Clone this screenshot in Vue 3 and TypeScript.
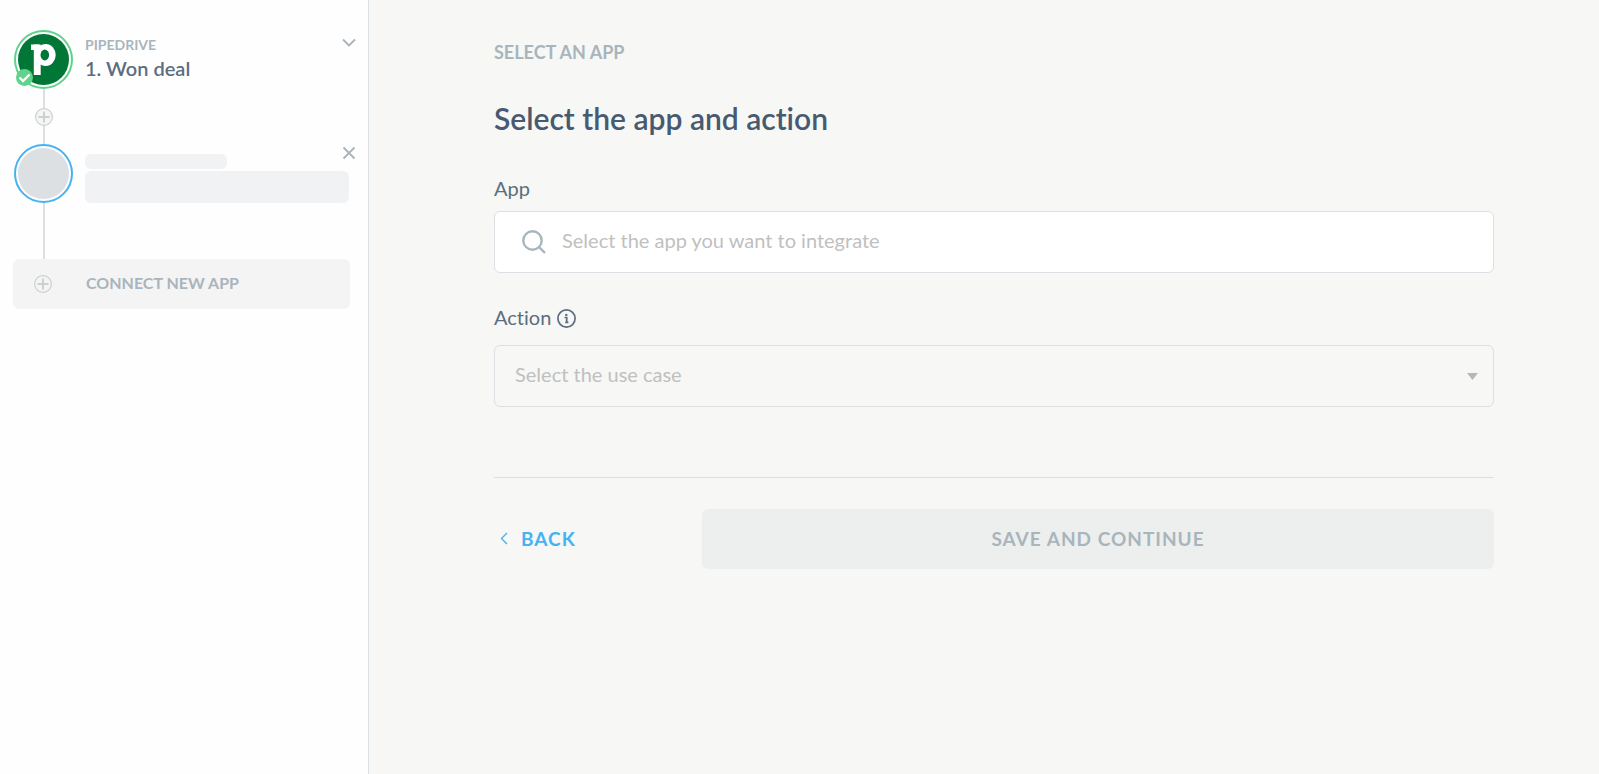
<script setup lang="ts">
import { ref } from 'vue'

const appQuery = ref('')
const action = ref('')
</script>

<template>
  <div class="layout">
    <aside class="sidebar">
      <ol class="steps">
        <li class="step">
          <div class="avatar done">
            <svg class="logo" viewBox="0 0 51 51" aria-hidden="true">
              <circle cx="25.5" cy="25.5" r="25.5" fill="#017737" />
              <ellipse cx="27.7" cy="21" rx="10" ry="11" fill="#fff" />
              <rect x="13" y="10.5" width="8" height="5.5" fill="#fff" />
              <rect x="15.8" y="10.5" width="6.9" height="30.5" fill="#fff" />
              <ellipse cx="26.8" cy="21" rx="4.3" ry="5.4" fill="#017737" />
            </svg>
            <svg class="check" viewBox="0 0 17 17" aria-hidden="true">
              <circle cx="8.5" cy="8.5" r="8.5" fill="#5fd38a" />
              <path d="M3.500 8.500l3.500 3.500 6.500-6.500" fill="none" stroke="#fff" stroke-width="2.4" />
            </svg>
          </div>
          <div class="info">
            <span class="app-name">PIPEDRIVE</span>
            <span class="step-name">1. Won deal</span>
          </div>
          <button class="icon-button" type="button" aria-label="Expand step">
            <svg width="14" height="14" viewBox="0 0 14 14"><path d="M1 3.5l6 6 6-6" /></svg>
          </button>
        </li>
        <li class="link short">
          <button class="add" type="button" aria-label="Add step">
            <svg width="18" height="18" viewBox="0 0 18 18">
              <circle cx="9" cy="9" r="8.4" fill="#f5f5f5" /><path d="M9 3.5v11M3.5 9h11" />
            </svg>
          </button>
        </li>
        <li class="step">
          <div class="avatar current"><div class="blank"></div></div>
          <div class="skeleton">
            <div class="bar small"></div>
            <div class="bar"></div>
          </div>
          <button class="icon-button" type="button" aria-label="Remove step">
            <svg width="14" height="14" viewBox="0 0 14 14"><path d="M1.5 1.5l11 11M12.5 1.5l-11 11" /></svg>
          </button>
        </li>
        <li class="link"></li>
      </ol>
      <button class="connect" type="button">
        <svg class="plus" width="18" height="18" viewBox="0 0 18 18" aria-hidden="true">
          <circle cx="9" cy="9" r="8.4" fill="none" /><path d="M9 3.5v11M3.5 9h11" />
        </svg>
        <span>CONNECT NEW APP</span>
      </button>
    </aside>

    <main class="main">
      <p class="eyebrow">SELECT AN APP</p>
      <h1>Select the app and action</h1>
      <form @submit.prevent>
        <label class="label" for="app">App</label>
        <div class="field search">
          <svg width="24" height="24" viewBox="0 0 24 24" aria-hidden="true">
            <circle cx="10.5" cy="10.5" r="9.2" /><path d="M17 17l6 6" />
          </svg>
          <input id="app" v-model="appQuery" type="text" placeholder="Select the app you want to integrate" />
        </div>
        <div class="label-row">
          <label class="label" for="action">Action</label>
          <svg class="help" width="19" height="19" viewBox="0 0 19 19" aria-hidden="true">
            <circle cx="9.5" cy="9.5" r="8.6" fill="none" stroke="#5c6d80" stroke-width="1.7" />
            <circle cx="9.3" cy="5.9" r="1.2" fill="#5c6d80" />
            <path d="M7.500 8.500h2.200v4.800M8.200 13.300h3.200" fill="none" stroke="#5c6d80" stroke-width="1.7" />
          </svg>
        </div>
        <div class="field">
          <select id="action" v-model="action">
            <option value="">Select the use case</option>
          </select>
          <svg class="caret" width="11" height="7" viewBox="0 0 11 7" aria-hidden="true"><path d="M0 0h11L5.500 7z" fill="#b4b8ba" /></svg>
        </div>
        <hr />
        <div class="actions">
          <button class="back" type="button">
            <svg width="8" height="13" viewBox="0 0 8 13" aria-hidden="true"><path d="M7 1L1.500 6.500 7 12" /></svg>
            <span>BACK</span>
          </button>
          <button class="save" type="submit" disabled>SAVE AND CONTINUE</button>
        </div>
      </form>
    </main>
  </div>
</template>

<style>
body {
  background: #f7f7f5;
}
</style>

<style scoped>
* {
  box-sizing: border-box;
}
.layout {
  display: flex;
  min-height: 100vh;
  background: #f7f7f5;
  font-family: Lato, "Liberation Sans", sans-serif;
  font-variant-ligatures: none;
  color: #475a70;
}
button,
input,
select {
  font: inherit;
}
button {
  padding: 0;
  border: 0;
  background: none;
  cursor: pointer;
}
svg {
  display: block;
  flex: none;
}
.sidebar {
  flex: none;
  width: 369px;
  padding: 30px 12px 0 13px;
  background: #fefefe;
  border-right: 1px solid #dbe0e4;
}
.steps {
  margin: 0;
  padding: 0 0 0 1px;
  list-style: none;
}
.step {
  display: flex;
  height: 59px;
}
.avatar {
  position: relative;
  flex: none;
  width: 59px;
  height: 59px;
  padding: 2px;
  border: 2px solid;
  border-radius: 50%;
}
.done {
  border-color: #5fd38a;
}
.current {
  border-color: #45b3f2;
}
.blank {
  height: 51px;
  border-radius: 50%;
  background: #dce0e3;
}
.logo {
  width: 51px;
  height: 51px;
}
.check {
  position: absolute;
  left: 0;
  bottom: 1px;
  width: 17px;
  height: 17px;
}
.info {
  flex: 1;
  display: flex;
  flex-direction: column;
  padding: 6px 0 0 12px;
}
.app-name {
  font-size: 14px;
  line-height: 18px;
  font-weight: 700;
  color: #a9b5bc;
}
.step-name {
  font-size: 20px;
  line-height: 28px;
  font-weight: 600;
  color: #5c6d80;
}
.icon-button {
  height: 14px;
  margin-top: 2px;
}
.step:first-child .icon-button {
  margin-top: 6px;
}
.icon-button path {
  fill: none;
  stroke: #a9b3ba;
  stroke-width: 1.8;
}
.link {
  display: flex;
  align-items: center;
  justify-content: center;
  width: 59px;
  height: 56px;
  background: linear-gradient(#dce0e4, #dce0e4) center / 2px 100% no-repeat;
}
.link.short {
  height: 55px;
}
.add circle,
.plus circle {
  stroke: #cdd0d1;
  stroke-width: 1.2;
}
.add path,
.plus path {
  stroke: #cdd0d1;
  stroke-width: 2;
}
.skeleton {
  flex: 1;
  padding-top: 10px;
  padding-left: 12px;
  margin-right: -7px;
}
.bar {
  height: 32px;
  border-radius: 6px;
  background: #f1f2f4;
}
.small {
  width: 142px;
  height: 15px;
  margin-bottom: 2px;
}
.connect {
  display: flex;
  align-items: center;
  gap: 34px;
  width: calc(100% - 6px);
  height: 50px;
  padding-left: 21px;
  border-radius: 6px;
  background: #f4f4f4;
  color: #a9b5bc;
  font-size: 16px;
  font-weight: 700;
}
.connect span {
  padding-bottom: 4px;
}
.main {
  flex: 1;
  padding: 40px 105px 40px 125px;
}
.eyebrow {
  margin: 0;
  font-size: 18px;
  line-height: 24px;
  font-weight: 700;
  color: #a9b5bc;
}
h1 {
  margin: 34px 0 38px;
  font-size: 30px;
  line-height: 40px;
  font-weight: 600;
}
.label {
  display: block;
  font-size: 20px;
  line-height: 24px;
  color: #5c6d80;
}
.label-row {
  display: flex;
  align-items: center;
  gap: 6px;
  margin-top: 32px;
}
.help {
  margin-top: 2px;
}
.field {
  position: relative;
  display: flex;
  align-items: center;
  height: 62px;
  border: 1px solid #dcdfe3;
  border-radius: 6px;
}
.label + .field {
  margin-top: 11px;
}
.label-row + .field {
  margin-top: 16px;
}
.search {
  gap: 16px;
  padding: 0 20px 0 27px;
  background: #fff;
}
.search svg {
  fill: none;
  stroke: #a9b5bc;
  stroke-width: 2.4;
}
input,
select {
  flex: 1;
  min-width: 0;
  height: 100%;
  padding: 0 0 4px;
  border: 0;
  background: none;
  font-size: 20px;
  color: #bfc0c0;
  outline: none;
}
input::placeholder {
  color: #bfc0c0;
  opacity: 1;
}
select {
  appearance: none;
  padding-left: 20px;
}
.caret {
  position: absolute;
  right: 15px;
  pointer-events: none;
}
hr {
  height: 1px;
  margin: 70px 0 31px;
  border: 0;
  background: #dcdfe0;
}
.actions {
  display: flex;
  height: 60px;
}
.back {
  display: flex;
  align-items: center;
  gap: 13px;
  width: 208px;
  padding: 0 0 2px 6px;
  color: #45b3f2;
  font-size: 19px;
  font-weight: 700;
  letter-spacing: 1px;
}
.back path {
  fill: none;
  stroke: #45b3f2;
  stroke-width: 1.4;
}
.save {
  flex: 1;
  padding-bottom: 2px;
  border-radius: 6px;
  background: #edefee;
  color: #a9b5bc;
  font-size: 19px;
  font-weight: 700;
  letter-spacing: 1px;
}
</style>
